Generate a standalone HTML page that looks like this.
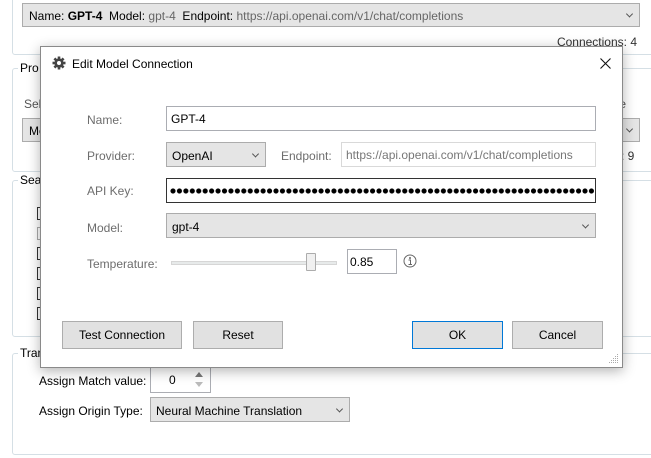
<!DOCTYPE html>
<html><head><meta charset="utf-8"><style>
*{box-sizing:border-box;margin:0;padding:0}
body{width:651px;height:458px;background:#fff;font-family:"Liberation Sans",sans-serif;font-size:12px;color:#000;position:relative;overflow:hidden}
.a{position:absolute}
.grp{position:absolute;border:1px solid #d5dfe5;border-radius:3px}
.lg{position:absolute;background:#fff;padding:0 2px;font-size:12px}
.cb{position:absolute;background:#e5e5e5;border:1px solid #acacac}
.chev{position:absolute;right:7px;top:50%;width:5px;height:5px;border-right:1px solid #555;border-bottom:1px solid #555;transform:translateY(-70%) rotate(45deg)}
.inp{position:absolute;background:#fff;border:1px solid #abadb3;padding-left:4px;display:flex;align-items:center}
.lbl{position:absolute;color:#6d6d6d;font-size:12px}
.btn{position:absolute;background:#e1e1e1;border:1px solid #adadad;display:flex;align-items:center;justify-content:center;font-size:12px}
.chk{position:absolute;left:37px;width:13px;height:13px;border:1px solid #333;background:#fff}
</style></head><body>
<div class="grp" style="left:12px;top:-5px;width:650px;height:60px"></div>
<div class="cb" style="left:22px;top:3px;width:618px;height:24px"><span class="a" style="left:6px;top:5px;color:#000">Name: <b>GPT-4</b>&nbsp; Model: <span style="color:#666">gpt-4</span>&nbsp; Endpoint: <span style="color:#666">https://api.openai.com/v1/chat/completions</span></span><div class="chev"></div></div>
<div class="a" style="right:14px;top:35px;color:#333">Connections: 4</div>

<div class="grp" style="left:12px;top:68px;width:650px;height:104px"></div>
<div class="lg" style="left:18px;top:61px">Pro</div>
<div class="a" style="left:24px;top:97px;color:#555">Sel</div>
<div class="cb" style="left:22px;top:118px;width:618px;height:24px"><span class="a" style="left:6px;top:5px">Me</span><div class="chev"></div></div>
<div class="a" style="left:616px;top:97px;color:#555">te</div>
<div class="a" style="left:621px;top:149px;color:#333">: 9</div>

<div class="grp" style="left:12px;top:180px;width:650px;height:157px"></div>
<div class="lg" style="left:18px;top:173px">Sea</div>
<div class="chk" style="top:207px"></div>
<div class="chk" style="top:227px;border-color:#aaa"></div>
<div class="chk" style="top:247px"></div>
<div class="chk" style="top:267px"></div>
<div class="chk" style="top:287px"></div>
<div class="chk" style="top:307px"></div>

<div class="grp" style="left:12px;top:353px;width:650px;height:102px"></div>
<div class="lg" style="left:18px;top:346px">Tran</div>
<div class="a" style="left:39px;top:374px">Assign Match value:</div>
<div class="inp" style="left:150px;top:367px;width:61px;height:26px;border-color:#abadb3"><span style="margin-left:14px">0</span>
<span class="a" style="left:44px;top:4px;width:0;height:0;border-left:4px solid transparent;border-right:4px solid transparent;border-bottom:5px solid #777"></span>
<span class="a" style="left:44px;top:14px;width:0;height:0;border-left:4px solid transparent;border-right:4px solid transparent;border-top:5px solid #bbb"></span></div>
<div class="a" style="left:39px;top:404px">Assign Origin Type:</div>
<div class="cb" style="left:150px;top:397px;width:200px;height:25px"><span class="a" style="left:5px;top:6px">Neural Machine Translation</span><div class="chev"></div></div>

<div class="a" style="left:40px;top:46px;width:583px;height:322px;background:#fff;border:1px solid #8a8a8a;box-shadow:0 3px 12px rgba(0,0,0,.3)">
 <svg class="a" style="left:11px;top:9px" width="14" height="14" viewBox="0 0 14 14"><g fill="#444"><circle cx="7" cy="7" r="4.6"/><g stroke="#444" stroke-width="2.6"><line x1="7" y1="0.5" x2="7" y2="13.5"/><line x1="0.5" y1="7" x2="13.5" y2="7"/><line x1="2.4" y1="2.4" x2="11.6" y2="11.6"/><line x1="11.6" y1="2.4" x2="2.4" y2="11.6"/></g></g><circle cx="7" cy="7" r="2" fill="#fff"/></svg>
 <div class="a" style="left:31px;top:10px;font-size:12px">Edit Model Connection</div>
 <svg class="a" style="left:559px;top:11px" width="11" height="11"><path d="M0.5 0.5L10.5 10.5M10.5 0.5L0.5 10.5" stroke="#111" stroke-width="1.1"/></svg>

 <div class="lbl" style="left:46px;top:66px">Name:</div>
 <div class="inp" style="left:125px;top:59px;width:430px;height:25px">GPT-4</div>
 <div class="lbl" style="left:46px;top:102px">Provider:</div>
 <div class="cb" style="left:125px;top:95px;width:100px;height:25px"><span class="a" style="left:5px;top:6px">OpenAI</span><div class="chev"></div></div>
 <div class="lbl" style="left:240px;top:102px">Endpoint:</div>
 <div class="inp" style="left:300px;top:95px;width:255px;height:25px;border-color:#d9d9d9;color:#777">https://api.openai.com/v1/chat/completions</div>
 <div class="lbl" style="left:46px;top:137px">API Key:</div>
 <div class="inp" style="left:125px;top:131px;width:430px;height:25px;border-color:#333"><div class="a" style="left:3px;top:9px;width:424px;height:6px;background:radial-gradient(circle at 3px 3px,#000 2.3px,transparent 2.8px);background-size:6.45px 6px;background-repeat:repeat-x"></div></div>
 <div class="lbl" style="left:46px;top:174px">Model:</div>
 <div class="cb" style="left:125px;top:166px;width:430px;height:25px"><span class="a" style="left:5px;top:6px">gpt-4</span><div class="chev"></div></div>
 <div class="lbl" style="left:46px;top:210px">Temperature:</div>
 <div class="a" style="left:130px;top:214px;width:166px;height:4px;background:#e7eaea;border:1px solid #d6d6d6"></div>
 <div class="a" style="left:265px;top:206px;width:10px;height:18px;background:#f0f0f0;border:1px solid #acacac;border-radius:1px"></div>
 <div class="inp" style="left:306px;top:202px;width:50px;height:25px;padding-left:2px">0.85</div>
 <svg class="a" style="left:362px;top:207px" width="14" height="14" viewBox="0 0 14 14"><circle cx="7" cy="7" r="6" fill="none" stroke="#666" stroke-width="1"/><circle cx="7" cy="4" r="1" fill="#666"/><path d="M5.5 6H7.5V10.5M5.5 10.5H9" stroke="#666" stroke-width="1" fill="none"/></svg>

 <div class="btn" style="left:21px;top:274px;width:120px;height:28px">Test Connection</div>
 <div class="btn" style="left:152px;top:274px;width:90px;height:28px">Reset</div>
 <div class="btn" style="left:371px;top:274px;width:91px;height:28px;border-color:#0078d7">OK</div>
 <div class="btn" style="left:471px;top:274px;width:91px;height:28px">Cancel</div>
 <svg class="a" style="left:568px;top:307px" width="10" height="10"><g fill="#aaa"><rect x="8" y="0" width="1" height="1"/><rect x="6" y="2" width="1" height="1"/><rect x="8" y="2" width="1" height="1"/><rect x="4" y="4" width="1" height="1"/><rect x="6" y="4" width="1" height="1"/><rect x="8" y="4" width="1" height="1"/><rect x="2" y="6" width="1" height="1"/><rect x="4" y="6" width="1" height="1"/><rect x="6" y="6" width="1" height="1"/><rect x="8" y="6" width="1" height="1"/><rect x="0" y="8" width="1" height="1"/><rect x="2" y="8" width="1" height="1"/><rect x="4" y="8" width="1" height="1"/><rect x="6" y="8" width="1" height="1"/><rect x="8" y="8" width="1" height="1"/></g></svg>
</div>
</body></html>
